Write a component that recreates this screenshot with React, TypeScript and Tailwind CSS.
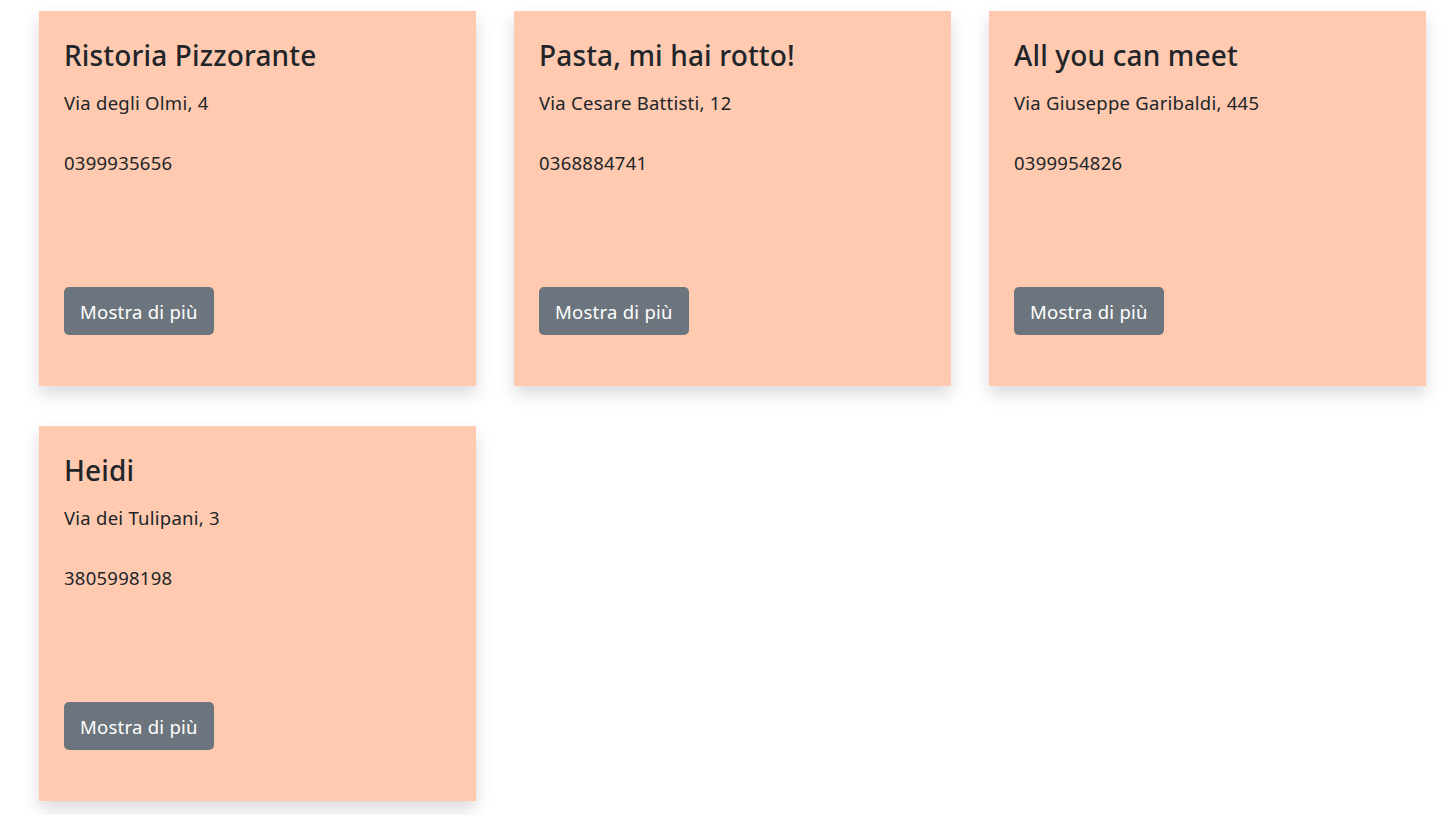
import React from "react";

type Place = {
  name: string;
  address: string;
  phone: string;
};

const places: Place[] = [
  { name: "Ristoria Pizzorante", address: "Via degli Olmi, 4", phone: "0399935656" },
  { name: "Pasta, mi hai rotto!", address: "Via Cesare Battisti, 12", phone: "0368884741" },
  { name: "All you can meet", address: "Via Giuseppe Garibaldi, 445", phone: "0399954826" },
  { name: "Heidi", address: "Via dei Tulipani, 3", phone: "3805998198" },
];

const PlaceCard = ({ place }: { place: Place }) => {
  return (
    <div className="flex flex-col h-[375px] bg-[#ffcab0] px-[25px] pt-[27px] pb-[51px] shadow-[0_8px_16px_rgba(0,0,0,0.15)] text-[#212529]">
      <h4 className="text-[28px] leading-[34px] font-medium tracking-[0.15px]">{place.name}</h4>
      <p className="mt-[17px] text-[18.5px] leading-[27px] tracking-[0.25px]">{place.address}</p>
      <p className="mt-[33px] text-[18.5px] leading-[27px] tracking-[0.25px]">{place.phone}</p>

      {/* button sits at the bottom of the card */}
      <div className="mt-auto">
        <button className="h-[48px] px-[16px] rounded-[5px] bg-[#6c757d] text-white text-[18.5px] leading-[27px] tracking-[0.25px]">
          Mostra di più
        </button>
      </div>
    </div>
  );
};

const App = () => {
  return (
    <div
      className="min-h-screen bg-white pl-[39px] pt-[11px] pb-[14px]"
      style={{ fontFamily: '"Noto Sans", "Open Sans", sans-serif' }}
    >
      <div className="grid grid-cols-[repeat(3,437px)] gap-x-[38px] gap-y-[40px]">
        {places.map((place) => (
          <PlaceCard key={place.name} place={place} />
        ))}
      </div>
    </div>
  );
};

export default App;
